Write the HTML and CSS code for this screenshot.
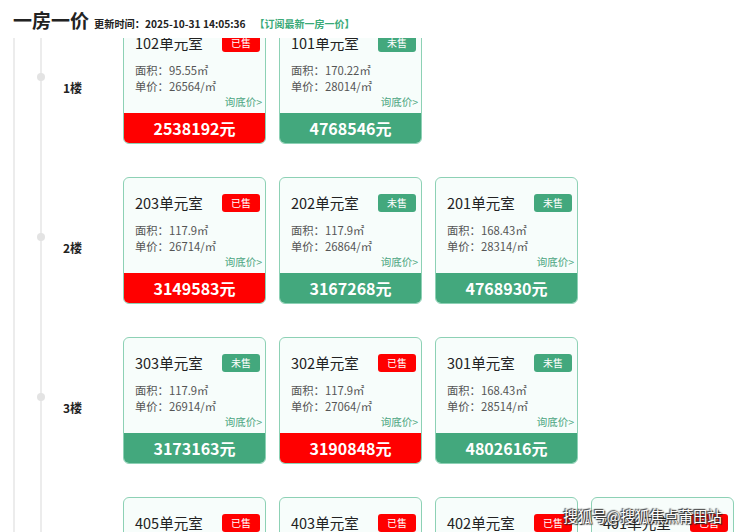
FILE: index.html
```html
<!DOCTYPE html>
<html lang="zh-CN">
<head>
    <meta charset="UTF-8">
    <meta name="viewport" content="width=device-width, initial-scale=1.0">
    <title>一房一价</title>
    <link rel="stylesheet" href="styles.css">
</head>
<body>

    <div class="top-bar">
        <h1>一房一价</h1>
        <span class="update-time">更新时间：2025-10-31 14:05:36</span>
        <a class="subscribe">【订阅最新一房一价】</a>
    </div>

    <div class="scroll-box">
        <div class="floors">
            <div class="floor-track">

                <div class="floor">
                    <span class="dot"></span>
                    <span class="floor-name">1楼</span>
                    <div class="rooms">
                        <div class="room sold">
                            <div class="room-head"><span class="room-no">102单元室</span><span class="badge">已售</span></div>
                            <div class="room-info">
                                <p>面积：95.55㎡</p>
                                <p>单价：26564/㎡</p>
                            </div>
                            <div class="ask">询底价&gt;</div>
                            <div class="price">2538192元</div>
                        </div>
                        <div class="room">
                            <div class="room-head"><span class="room-no">101单元室</span><span class="badge">未售</span></div>
                            <div class="room-info">
                                <p>面积：170.22㎡</p>
                                <p>单价：28014/㎡</p>
                            </div>
                            <div class="ask">询底价&gt;</div>
                            <div class="price">4768546元</div>
                        </div>
                    </div>
                </div>

                <div class="floor">
                    <span class="dot"></span>
                    <span class="floor-name">2楼</span>
                    <div class="rooms">
                        <div class="room sold">
                            <div class="room-head"><span class="room-no">203单元室</span><span class="badge">已售</span></div>
                            <div class="room-info">
                                <p>面积：117.9㎡</p>
                                <p>单价：26714/㎡</p>
                            </div>
                            <div class="ask">询底价&gt;</div>
                            <div class="price">3149583元</div>
                        </div>
                        <div class="room">
                            <div class="room-head"><span class="room-no">202单元室</span><span class="badge">未售</span></div>
                            <div class="room-info">
                                <p>面积：117.9㎡</p>
                                <p>单价：26864/㎡</p>
                            </div>
                            <div class="ask">询底价&gt;</div>
                            <div class="price">3167268元</div>
                        </div>
                        <div class="room">
                            <div class="room-head"><span class="room-no">201单元室</span><span class="badge">未售</span></div>
                            <div class="room-info">
                                <p>面积：168.43㎡</p>
                                <p>单价：28314/㎡</p>
                            </div>
                            <div class="ask">询底价&gt;</div>
                            <div class="price">4768930元</div>
                        </div>
                    </div>
                </div>

                <div class="floor">
                    <span class="dot"></span>
                    <span class="floor-name">3楼</span>
                    <div class="rooms">
                        <div class="room">
                            <div class="room-head"><span class="room-no">303单元室</span><span class="badge">未售</span></div>
                            <div class="room-info">
                                <p>面积：117.9㎡</p>
                                <p>单价：26914/㎡</p>
                            </div>
                            <div class="ask">询底价&gt;</div>
                            <div class="price">3173163元</div>
                        </div>
                        <div class="room sold">
                            <div class="room-head"><span class="room-no">302单元室</span><span class="badge">已售</span></div>
                            <div class="room-info">
                                <p>面积：117.9㎡</p>
                                <p>单价：27064/㎡</p>
                            </div>
                            <div class="ask">询底价&gt;</div>
                            <div class="price">3190848元</div>
                        </div>
                        <div class="room">
                            <div class="room-head"><span class="room-no">301单元室</span><span class="badge">未售</span></div>
                            <div class="room-info">
                                <p>面积：168.43㎡</p>
                                <p>单价：28514/㎡</p>
                            </div>
                            <div class="ask">询底价&gt;</div>
                            <div class="price">4802616元</div>
                        </div>
                    </div>
                </div>

                <div class="floor">
                    <span class="dot"></span>
                    <span class="floor-name">4楼</span>
                    <div class="rooms">
                        <div class="room sold">
                            <div class="room-head"><span class="room-no">405单元室</span><span class="badge">已售</span></div>
                            <div class="room-info">
                                <p>面积：95.55㎡</p>
                                <p>单价：26864/㎡</p>
                            </div>
                            <div class="ask">询底价&gt;</div>
                            <div class="price">2566856元</div>
                        </div>
                        <div class="room sold">
                            <div class="room-head"><span class="room-no">403单元室</span><span class="badge">已售</span></div>
                            <div class="room-info">
                                <p>面积：117.9㎡</p>
                                <p>单价：27014/㎡</p>
                            </div>
                            <div class="ask">询底价&gt;</div>
                            <div class="price">3184951元</div>
                        </div>
                        <div class="room sold">
                            <div class="room-head"><span class="room-no">402单元室</span><span class="badge">已售</span></div>
                            <div class="room-info">
                                <p>面积：117.9㎡</p>
                                <p>单价：27164/㎡</p>
                            </div>
                            <div class="ask">询底价&gt;</div>
                            <div class="price">3202636元</div>
                        </div>
                        <div class="room sold">
                            <div class="room-head"><span class="room-no">401单元室</span><span class="badge">已售</span></div>
                            <div class="room-info">
                                <p>面积：168.43㎡</p>
                                <p>单价：28614/㎡</p>
                            </div>
                            <div class="ask">询底价&gt;</div>
                            <div class="price">4819457元</div>
                        </div>
                    </div>
                </div>

            </div>
        </div>
    </div>

    <div class="watermark">搜狐号@搜狐焦点莆田站</div>

</body>
</html>
```

FILE: styles.css
```css
* {
    box-sizing: border-box;
}
html, body {
    height: 100%;
}
body {
    font-family: "Noto Sans CJK SC", "Noto Sans", sans-serif;
    background-color: #fff;
    color: #222;
    margin: 0;
    overflow: hidden;
    display: flex;
    flex-direction: column;
}
.top-bar {
    height: 38px;
    display: flex;
    align-items: baseline;
    padding: 6px 0 0 13px;
    background: #fff;
    flex-shrink: 0;
}
h1 {
    font-size: 19px;
    font-weight: bold;
    margin: 0 5px 0 0;
    line-height: 28px;
}
.update-time {
    font-size: 10.2px;
    font-weight: bold;
    color: #222;
}
.subscribe {
    font-size: 10px;
    font-weight: bold;
    color: #3aaa78;
    margin-left: 9px;
}
.scroll-box {
    flex: 1;
    overflow: hidden;
}
/* two grey rails down the left side */
.floors {
    margin-left: 13px;
    border-left: 2px solid #ececec;
    min-height: 100%;
}
.floor-track {
    margin-left: 25px;
    border-left: 2px solid #ececec;
    margin-top: -21px;
    min-height: 900px;
}
.floor {
    display: flex;
    align-items: flex-start;
    padding-bottom: 33px;
}
.dot {
    width: 8px;
    height: 8px;
    border-radius: 50%;
    background: #e3e3e3;
    margin: 56px 0 0 -5px;
    flex-shrink: 0;
}
.floor-name {
    width: 60px;
    margin: 63px 0 0 18px;
    font-size: 12px;
    font-weight: bold;
    line-height: 16px;
    flex-shrink: 0;
}
.rooms {
    display: flex;
    gap: 13px;
}
.room {
    width: 143px;
    height: 127px;
    border: 1px solid #8dd1b5;
    border-radius: 6px;
    background: #f7fdfb;
    overflow: hidden;
    display: flex;
    flex-direction: column;
    --tone: #43a87d;
}
.room.sold {
    --tone: #ff0000;
}
.room-head {
    display: flex;
    justify-content: space-between;
    align-items: center;
    padding: 15px 5px 0 11px;
    height: 34px;
}
.room-no {
    font-size: 14.5px;
    color: #222;
}
.badge {
    width: 38px;
    height: 18px;
    line-height: 18px;
    border-radius: 3px;
    background: var(--tone);
    color: #fff;
    font-size: 10px;
    text-align: center;
}
.room-info {
    padding: 10px 0 0 11px;
    font-size: 11.3px;
    line-height: 16px;
    color: #555;
}
.room-info p {
    margin: 0;
}
.ask {
    font-size: 10.5px;
    line-height: 16px;
    color: #4aa57f;
    text-align: right;
    padding-right: 3px;
}
.price {
    margin-top: auto;
    height: 30px;
    line-height: 30px;
    background: var(--tone);
    color: #fff;
    font-size: 16px;
    font-weight: bold;
    text-align: center;
}
.watermark {
    position: absolute;
    right: 18px;
    bottom: 6px;
    color: #fff;
    font-size: 14.5px;
    text-shadow: 0 0 2px #333, 1px 1px 1px #222, -1px -1px 1px #444;
}
```
